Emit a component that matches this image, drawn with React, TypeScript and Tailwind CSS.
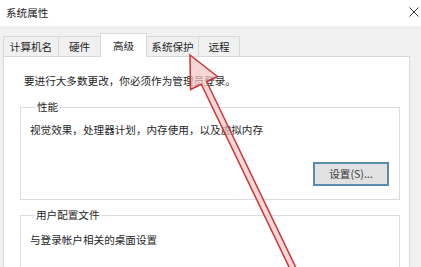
import React from "react";

const font = "font-['Noto_Sans_CJK_SC','Noto_Sans',sans-serif]";

function Tab({ label, w, selected }: { label: string; w: string; selected?: boolean }) {
  if (selected) {
    return (
      <div
        className={`${w} h-[24px] -mb-px -ml-px relative z-10 bg-white border-t border-l border-r border-[#d9d9d9] flex items-start justify-center pt-[4px] text-[10.6px] leading-[16px] text-[#1e1e1e]`}
      >
        {label}
      </div>
    );
  }
  return (
    <div
      className={`${w} h-[20px] -ml-px first:ml-0 bg-[#f0f0f0] border-t border-l border-r border-[#d9d9d9] flex items-center justify-center text-[10.6px] leading-[16px] text-[#1e1e1e]`}
    >
      {label}
    </div>
  );
}

export default function App() {
  return (
    <div className={`w-[421px] h-[267px] bg-[#f0f0f0] relative overflow-hidden ${font}`}>
      {/* Title bar */}
      <div className="h-[26px] bg-white flex items-center justify-between pl-[6px] pr-[2px]">
        <span className="text-[10.6px] leading-[16px] text-[#222]">系统属性</span>
        <svg width="10" height="10" viewBox="0 0 10 10" className="mt-[-2px]">
          <path d="M0.5 0.5 L9.5 9.5 M9.5 0.5 L0.5 9.5" stroke="#333" strokeWidth="1" fill="none" />
        </svg>
      </div>

      {/* Tabs */}
      <div className="pl-[3px] pt-[7px] flex items-end">
        <Tab label="计算机名" w="w-[56px]" />
        <Tab label="硬件" w="w-[43px]" />
        <Tab label="高级" w="w-[47px]" selected />
        <Tab label="系统保护" w="w-[53px]" />
        <Tab label="远程" w="w-[42px]" />
      </div>

      {/* Panel */}
      <div className="ml-[3px] w-[407px] h-[260px] bg-white border border-[#d9d9d9] flex flex-col text-[#1e1e1e]">
        <div className="pl-[20px] pt-[16px] text-[10.6px] leading-[16px]">
          要进行大多数更改，你必须作为管理员登录。
        </div>

        <fieldset className="ml-[16px] mr-[9px] mt-[11px] border border-[#dcdcdc] pl-[9px] pr-[10px] pt-[8px] pb-[13px] flex flex-col">
          <legend className="ml-[5px] px-[2px] text-[10.6px] leading-[14px]">性能</legend>
          <div className="text-[10.6px] leading-[16px]">视觉效果，处理器计划，内存使用，以及虚拟内存</div>
          <div className="flex justify-end mt-[24px]">
            <div className="w-[76px] h-[24px] bg-[#e1e1e1] border-2 border-[#5b8cae] flex items-center justify-center text-[10.6px] leading-[16px] text-[#333]">
              设置(S)...
            </div>
          </div>
        </fieldset>

        <fieldset className="ml-[16px] mr-[9px] mt-[8px] border border-[#dcdcdc] pl-[9px] pt-[10px] h-[80px]">
          <legend className="ml-[4px] px-[2px] text-[10.6px] leading-[14px]">用户配置文件</legend>
          <div className="text-[10.6px] leading-[16px]">与登录帐户相关的桌面设置</div>
        </fieldset>
      </div>

      {/* Red annotation arrow */}
      <svg
        className="absolute inset-0 pointer-events-none"
        width="421"
        height="267"
        viewBox="0 0 421 267"
      >
        <polygon
          points="190,55 217.5,76.5 206.7,81.7 301.9,280.1 296.6,282.7 201.3,84.3 190.5,89.5"
          fill="#f3c4c4"
          fillOpacity="0.7"
          stroke="#c73636"
          strokeWidth="1.5"
          strokeLinejoin="miter"
        />
      </svg>
    </div>
  );
}
